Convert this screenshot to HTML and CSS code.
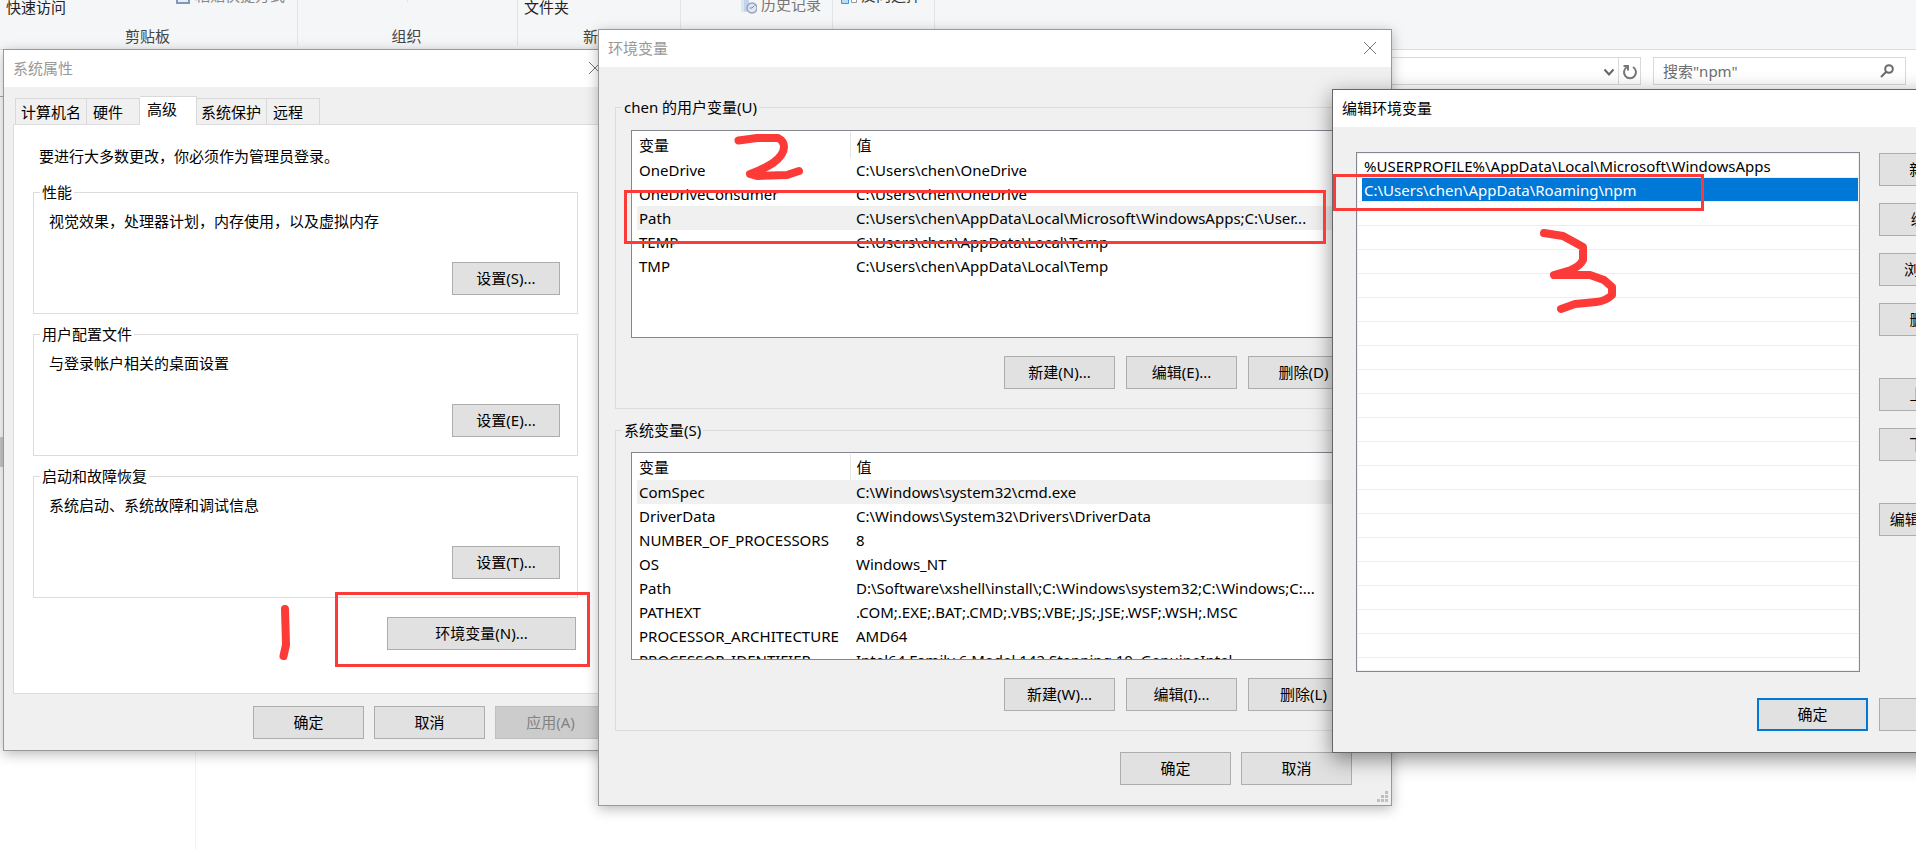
FILE: index.html
```html
<!DOCTYPE html>
<html lang="zh-CN">
<head>
  <meta charset="UTF-8">
  <title>环境变量</title>
  <link rel="stylesheet" href="styles.css">
</head>
<body>
  <!-- 资源管理器 -->
  <div class="explorer">
    <div class="ribbon">
      <div class="group clipboard">
        <div class="tools">
          <span class="big">快速访问</span>
          <span class="small faded">
            <svg class="icon" viewBox="0 0 16 16"><path d="M2 1v13h12V1" fill="#e4edf8" stroke="#7f97bd" stroke-width="2"/></svg>
            粘贴快捷方式
          </span>
        </div>
        <div class="caption">剪贴板</div>
      </div>
      <div class="group organize">
        <div class="divider"></div>
        <div class="caption">组织</div>
      </div>
      <div class="group create">
        <div class="tools"><span class="big">文件夹</span></div>
        <div class="caption">新建</div>
      </div>
      <div class="group open">
        <div class="tools"><span class="small history">
          <svg class="icon" viewBox="0 0 16 16"><path d="M0 0h8v12l-3 2-5-1z" fill="#c3d3ea"/><path d="M0 0h3v14l-3-1z" fill="#dbe6f5"/><circle cx="11" cy="10" r="5" fill="#dfe6f2" stroke="#93a3c4" stroke-width="1.500"/><path d="M13.500 7.500L11 10H8.500" fill="none" stroke="#7385b0"/></svg>
          历史记录
        </span></div>
        <div class="caption">打开</div>
      </div>
      <div class="group choose">
        <div class="tools"><span class="small">
          <svg class="icon" viewBox="0 0 16 16"><path d="M.5 4.500h7v10h-7z" fill="#b5dcf8" stroke="#3a93dd"/><path d="M10.500 7.500h5v6h-5z" fill="#fff" stroke="#999"/></svg>
          反向选择
        </span></div>
        <div class="caption">选择</div>
      </div>
    </div>
    <div class="address-row">
      <div class="address">
        <svg class="arrow" viewBox="0 0 12 9"><path d="M1.500 1.500L6 6.500l4.500-5" fill="none" stroke="#666" stroke-width="2"/></svg>
        <button class="refresh" aria-label="刷新">
          <svg viewBox="0 0 16 16"><path d="M11 3A6 6 0 1 1 5 3" fill="none" stroke="#777" stroke-width="2"/><path d="M1.500 2H6v4.500" fill="none" stroke="#777" stroke-width="2"/></svg>
        </button>
      </div>
      <div class="search">
        <input type="text" aria-label="搜索" placeholder="搜索&quot;npm&quot;">
        <svg viewBox="0 0 14 14"><circle cx="9" cy="5" r="3.800" fill="none" stroke="#6a6a6a" stroke-width="2"/><path d="M6.500 7.500L1 13" stroke="#6a6a6a" stroke-width="2"/></svg>
      </div>
    </div>
    <div class="files">
      <div class="tree"><div class="thumb"></div></div>
    </div>
  </div>

  <!-- 系统属性 -->
  <div class="window props">
    <div class="titlebar">
      <span>系统属性</span>
      <svg class="close" viewBox="0 0 14 14"><path d="M1 1l12 12M13 1L1 13" stroke="#777"/></svg>
    </div>
    <div class="props-body">
      <div class="tabs">
        <button class="tab t-name">计算机名</button>
        <button class="tab t-hard">硬件</button>
        <button class="tab t-adv active">高级</button>
        <button class="tab t-prot">系统保护</button>
        <button class="tab t-remote">远程</button>
      </div>
      <div class="panel">
        <p class="note">要进行大多数更改，你必须作为管理员登录。</p>
        <fieldset>
          <legend>性能</legend>
          <p>视觉效果，处理器计划，内存使用，以及虚拟内存</p>
          <button class="btn setting">设置(S)...</button>
        </fieldset>
        <fieldset>
          <legend>用户配置文件</legend>
          <p>与登录帐户相关的桌面设置</p>
          <button class="btn setting">设置(E)...</button>
        </fieldset>
        <fieldset>
          <legend>启动和故障恢复</legend>
          <p>系统启动、系统故障和调试信息</p>
          <button class="btn setting">设置(T)...</button>
        </fieldset>
        <button class="btn env">环境变量(N)...</button>
      </div>
      <div class="buttons">
        <button class="btn">确定</button>
        <button class="btn">取消</button>
        <button class="btn" disabled>应用(A)</button>
      </div>
    </div>
  </div>

  <!-- 环境变量 -->
  <div class="window vars">
    <div class="titlebar">
      <span>环境变量</span>
      <svg class="close" viewBox="0 0 14 14"><path d="M1 1l12 12M13 1L1 13" stroke="#777"/></svg>
    </div>
    <div class="vars-body">
      <fieldset>
        <legend>chen 的用户变量(U)</legend>
        <div class="list">
          <table>
            <thead><tr><th class="name">变量</th><th>值</th></tr></thead>
            <tbody>
              <tr><td>OneDrive</td><td>C:\Users\chen\OneDrive</td></tr>
              <tr><td>OneDriveConsumer</td><td>C:\Users\chen\OneDrive</td></tr>
              <tr class="current"><td>Path</td><td>C:\Users\chen\AppData\Local\Microsoft\WindowsApps;C:\User...</td></tr>
              <tr><td>TEMP</td><td>C:\Users\chen\AppData\Local\Temp</td></tr>
              <tr><td>TMP</td><td>C:\Users\chen\AppData\Local\Temp</td></tr>
            </tbody>
          </table>
        </div>
        <div class="buttons">
          <button class="btn">新建(N)...</button>
          <button class="btn">编辑(E)...</button>
          <button class="btn">删除(D)</button>
        </div>
      </fieldset>
      <fieldset>
        <legend>系统变量(S)</legend>
        <div class="list">
          <table>
            <thead><tr><th class="name">变量</th><th>值</th></tr></thead>
            <tbody>
              <tr class="current"><td>ComSpec</td><td>C:\Windows\system32\cmd.exe</td></tr>
              <tr><td>DriverData</td><td>C:\Windows\System32\Drivers\DriverData</td></tr>
              <tr><td>NUMBER_OF_PROCESSORS</td><td>8</td></tr>
              <tr><td>OS</td><td>Windows_NT</td></tr>
              <tr><td>Path</td><td>D:\Software\xshell\install\;C:\Windows\system32;C:\Windows;C:...</td></tr>
              <tr><td>PATHEXT</td><td>.COM;.EXE;.BAT;.CMD;.VBS;.VBE;.JS;.JSE;.WSF;.WSH;.MSC</td></tr>
              <tr><td>PROCESSOR_ARCHITECTURE</td><td>AMD64</td></tr>
              <tr><td>PROCESSOR_IDENTIFIER</td><td>Intel64 Family 6 Model 142 Stepping 10, GenuineIntel</td></tr>
            </tbody>
          </table>
        </div>
        <div class="buttons">
          <button class="btn">新建(W)...</button>
          <button class="btn">编辑(I)...</button>
          <button class="btn">删除(L)</button>
        </div>
      </fieldset>
      <div class="buttons bottom">
        <button class="btn">确定</button>
        <button class="btn">取消</button>
      </div>
    </div>
    <svg class="grip" viewBox="0 0 11 11"><path d="M8 0h3v3H8zM4 4h3v3H4zM8 4h3v3H8zM0 8h3v3H0zM4 8h3v3H4zM8 8h3v3H8z" fill="#bfbfbf"/></svg>
  </div>

  <!-- 编辑环境变量 -->
  <div class="window edit">
    <div class="titlebar"><span>编辑环境变量</span></div>
    <div class="edit-body">
      <div class="edit-main">
        <ul class="paths">
          <li>%USERPROFILE%\AppData\Local\Microsoft\WindowsApps</li>
          <li class="selected">C:\Users\chen\AppData\Roaming\npm</li>
        </ul>
        <div class="side">
          <button class="btn">新建(N)</button>
          <button class="btn">编辑(E)</button>
          <button class="btn">浏览(B)...</button>
          <button class="btn">删除(D)</button>
          <button class="btn spaced">上移(U)</button>
          <button class="btn">下移(O)</button>
          <button class="btn spaced">编辑文本(T)...</button>
        </div>
      </div>
      <div class="buttons">
        <button class="btn default">确定</button>
        <button class="btn">取消</button>
      </div>
    </div>
  </div>

  <!-- 标注 -->
  <svg class="marks" width="1916" height="850" viewBox="0 0 1916 850">
    <g class="box">
      <rect x="336.500" y="593.500" width="252" height="72"/>
      <rect x="625.500" y="191.500" width="699" height="51"/>
      <rect x="1334.500" y="175.500" width="368" height="34"/>
    </g>
    <g class="pen">
      <path d="M285 609L286 645L283.500 656"/>
      <path d="M738.500 140.500L757 138H778Q784 141 784 147Q784 155 773 163Q760 171 750 174L757 176L787 175L799 171"/>
      <path d="M1544 233L1563 236L1574 242L1583 247V260Q1580 266 1571 270L1554 275H1590L1604 280L1612 287V295Q1606 301 1596 302L1575 304L1561 309"/>
    </g>
  </svg>
</body>
</html>
```
FILE: styles.css
```css
* {
  box-sizing: border-box;
}
html, body {
  height: 100%;
}
body {
  margin: 0;
  overflow: hidden;
  background: #fff;
  color: #000;
  font: 15px/20px "Noto Sans", "Noto Sans CJK SC", sans-serif;
}
button, input {
  font: inherit;
  color: inherit;
}
p {
  margin: 0;
}

/* explorer */
.explorer {
  display: flex;
  flex-direction: column;
  height: 100%;
}
.ribbon {
  display: flex;
  height: 50px;
  background: #f5f6f7;
  border-bottom: 1px solid #dadbdc;
  overflow: hidden;
}
.group {
  display: flex;
  flex-direction: column;
  justify-content: flex-end;
  height: 46px;
  border-right: 1px solid #e2e3e4;
  color: #444;
}
.clipboard { width: 298px; }
.organize { width: 220px; }
.create { width: 163px; }
.open { width: 152px; }
.choose { width: 102px; }
.tools {
  display: flex;
  align-items: flex-end;
  height: 20px;
  padding-left: 6px;
}
.big {
  color: #222;
}
.caption {
  margin: 9px 2px 0 0;
  text-align: center;
}
.small {
  display: flex;
  align-items: flex-end;
  gap: 4px;
  white-space: nowrap;
}
.faded {
  margin: 0 0 12px 109px;
  color: #888;
}
.history {
  margin: 0 0 3px 54px;
  color: #777;
}
.choose .small {
  margin: 0 0 12px 2px;
  color: #333;
}
.icon {
  width: 16px;
  height: 16px;
}
.divider {
  width: 1px;
  height: 20px;
  margin: 0 auto 15px;
  background: #e2e3e4;
}
.address-row {
  display: flex;
  gap: 12px;
  padding: 7px 10px 0 6px;
}
.address {
  display: flex;
  flex: 1;
  align-items: center;
  justify-content: flex-end;
  height: 28px;
  border: 1px solid #d9d9d9;
}
.arrow {
  width: 12px;
  height: 9px;
  margin: 2px 3px 0 0;
}
.refresh {
  display: flex;
  align-items: center;
  width: 22px;
  height: 26px;
  padding: 2px 2px 0 3px;
  border: 0;
  border-left: 1px solid #d9d9d9;
  background: none;
}
.search {
  display: flex;
  align-items: center;
  width: 253px;
  height: 28px;
  padding: 0 11px 0 9px;
  border: 1px solid #d9d9d9;
}
.search input {
  flex: 1;
  min-width: 0;
  padding: 0;
  border: 0;
  outline: 0;
}
.search input::placeholder {
  color: #6d6d6d;
}
.search svg {
  width: 14px;
  height: 14px;
}
.files {
  flex: 1;
  margin-top: 11px;
}
.tree {
  width: 196px;
  height: 100%;
  padding-top: 340px;
  border-top: 1px solid #aaa;
  border-right: 1px solid #f3f3f3;
}
.thumb {
  width: 10px;
  height: 30px;
  background: #cdcdcd;
}

/* windows */
.window {
  position: absolute;
  background: #f0f0f0;
  border: 1px solid #999;
  box-shadow: 0 3px 12px rgba(0,0,0,0.28);
}
.titlebar {
  display: flex;
  align-items: center;
  justify-content: space-between;
  height: 37px;
  padding: 0 14px 1px 9px;
  background: #fff;
  color: #999;
}
.close {
  width: 14px;
  height: 14px;
}
.btn {
  width: 111px;
  height: 33px;
  padding: 0 0 2px;
  border: 1px solid #adadad;
  background: #e1e1e1;
  white-space: nowrap;
}
.btn:disabled {
  border-color: #bfbfbf;
  background: #ccc;
  color: #838383;
}
.btn.default {
  border: 2px solid #0078d7;
}
.buttons {
  display: flex;
  justify-content: flex-end;
  gap: 10px;
}
fieldset {
  min-width: 0;
  margin: 0;
  padding: 0;
  border: 1px solid #dcdcdc;
}
legend {
  margin-left: -9px;
  padding: 0 2px;
}

/* system properties */
.props {
  left: 3px;
  top: 49px;
  width: 614px;
}
.props-body {
  padding: 9px 9px 11px;
}
.tabs {
  display: flex;
  align-items: flex-end;
  height: 28px;
  padding-left: 2px;
}
.tab {
  height: 26px;
  padding: 0 0 0 5px;
  border: 1px solid #d9d9d9;
  border-bottom: 0;
  border-left: 0;
  background: #f0f0f0;
  text-align: left;
}
.t-name {
  width: 72px;
  border-left: 1px solid #d9d9d9;
}
.t-hard {
  width: 53px;
  padding-left: 6px;
}
.t-adv { width: 57px; }
.t-prot {
  width: 70px;
  padding-left: 4px;
}
.t-remote {
  width: 53px;
  padding-left: 6px;
}
.tab.active {
  height: 29px;
  margin-bottom: -1px;
  padding: 0 0 4px 7px;
  background: #fff;
  z-index: 1;
}
.panel {
  padding: 21px 28px 43px 19px;
  border: 1px solid #dcdcdc;
  background: #fff;
}
.note {
  margin: 0 0 16px 6px;
}
.panel fieldset {
  height: 132px;
  margin-bottom: 10px;
  padding: 9px 17px 0 15px;
}
.setting {
  display: block;
  width: 108px;
  margin: 31px 0 0 auto;
}
.env {
  display: block;
  width: 189px;
  margin: 19px 2px 0 auto;
}
.props .buttons {
  margin: 12px 1px 0 0;
}

/* environment variables */
.vars {
  left: 598px;
  top: 29px;
  width: 794px;
}
.vars-body {
  padding: 30px 16px 20px;
}
.vars fieldset {
  margin-bottom: 11px;
  padding: 13px 15px 19px;
}
.vars fieldset + fieldset {
  padding-top: 12px;
}
.list {
  height: 208px;
  padding: 1px 5px;
  border: 1px solid #828790;
  background: #fff;
  overflow: hidden;
}
.list table {
  width: 100%;
  table-layout: fixed;
  border-collapse: collapse;
}
.list th, .list td {
  height: 24px;
  padding: 0 0 0 2px;
  font-weight: normal;
  text-align: left;
  white-space: nowrap;
}
.list th {
  height: 26px;
}
.list .name {
  width: 213px;
  border-right: 1px solid #e5e5e5;
}
.list th + th, .list td + td {
  padding-left: 6px;
}
.current {
  background: #f0f0f0;
}
.vars fieldset .buttons {
  gap: 11px;
  margin-top: 18px;
}
.vars .bottom {
  padding-right: 23px;
  margin-top: 21px;
}
.grip {
  position: absolute;
  right: 3px;
  bottom: 3px;
  width: 11px;
  height: 11px;
}

/* edit dialog */
.edit {
  left: 1332px;
  top: 89px;
  width: 682px;
  border-color: #666;
  box-shadow: 0 6px 20px rgba(0,0,0,0.45);
}
.edit .titlebar {
  color: #000;
}
.edit-body {
  padding: 25px 23px 21px;
}
.edit-main {
  display: flex;
  gap: 19px;
}
.paths {
  flex: 1;
  height: 520px;
  margin: 0;
  padding: 1px;
  border: 1px solid #828790;
  list-style: none;
  background: repeating-linear-gradient(#fff 0 23px, #ededed 23px 24px) content-box #fff;
}
.paths li {
  height: 24px;
  padding: 2px 0 2px 6px;
}
.paths .selected {
  height: 23px;
  margin: 0 0 1px 4px;
  padding-left: 2px;
  background: #0078d7;
  color: #fff;
}
.side {
  display: flex;
  flex-direction: column;
  gap: 17px;
  padding-top: 1px;
}
.spaced {
  margin-top: 25px;
}
.edit .buttons {
  margin-top: 26px;
  gap: 11px;
}

/* red marks */
.marks {
  position: absolute;
  left: 0;
  top: 0;
  pointer-events: none;
  fill: none;
  stroke: #fc3a38;
}
.box {
  stroke-width: 3px;
}
.pen {
  stroke-width: 8px;
  stroke-linecap: round;
  stroke-linejoin: round;
}
```
